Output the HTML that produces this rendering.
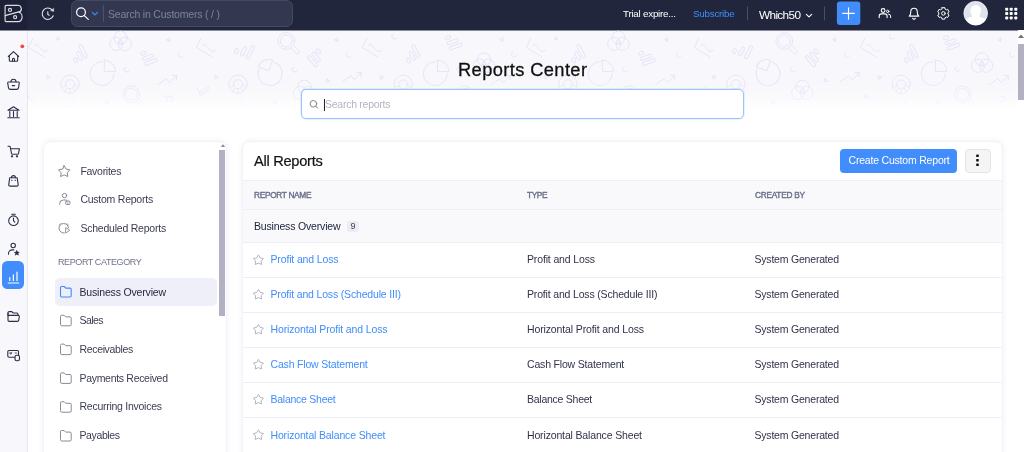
<!DOCTYPE html>
<html lang="en">
<head>
<meta charset="utf-8">
<title>Reports Center</title>
<style>
*{box-sizing:border-box;margin:0;padding:0}
html,body{width:1024px;height:452px;overflow:hidden;background:#fff}
body{font-family:"Liberation Sans",sans-serif;font-size:11px;color:#21263c;position:relative}
#wrap{position:absolute;left:0;top:0;width:1024px;height:452px;overflow:hidden;will-change:transform;opacity:.999}
.abs{position:absolute}
svg{display:block;overflow:visible}
/* top bar */
#top{left:0;top:0;width:1024px;height:30px;background:#21263c;box-shadow:0 1px 0 #8a8c9b}
#logo{left:0;top:0;width:27px;height:30px;background:#1d2137}
#gsearch{left:71px;top:-.5px;width:222px;height:27px;background:#333850;border:1px solid #454a63;border-radius:6.500px}
.t{position:absolute;white-space:nowrap;line-height:1}
/* side */
#side{left:0;top:31px;width:27.5px;height:422px;background:#f7f7fc;border-right:1px solid #e6e6f0}
/* hero */
#hero{left:28px;top:31px;width:990px;height:80px;background:#f8f8fc}
#vsb{left:1018px;top:30px;width:6px;height:422px;background:#fff}
#vsb i{position:absolute;left:0;top:14px;width:6px;height:56px;background:#b3b1c1}
#rsearch{left:301px;top:89px;width:443px;height:30px;background:#fff;border:1px solid #9dc3fa;border-radius:5px;box-shadow:0 0 0 1px rgba(64,141,251,.12)}
/* cards */
.card{background:#fff;border:1px solid #f2f2f9;border-radius:8px;box-shadow:0 0 5px rgba(200,200,235,.3)}
#lcard{left:43px;top:141px;width:184px;height:330px}
#rcard{left:242px;top:141px;width:761px;height:330px;overflow:hidden}
.li{color:#3a3d52;font-size:11px}
.sel{left:55px;top:278px;width:162px;height:28px;background:#efeffa;border-radius:5px}
.th{font-size:8.3px;font-weight:400;color:#6c718b;-webkit-text-stroke:.4px #6c718b}
.row{left:0;width:761px;height:35px;border-top:1px solid #eeeef5}
.lnk{color:#408dfb}
.cell{color:#30334a}
</style>
</head>
<body>
<div id="wrap">
<!-- TOP BAR -->
<div id="top" class="abs"></div>
<div id="logo" class="abs"></div>
<div id="gsearch" class="abs"></div>
<svg class="abs" style="left:0;top:0" width="1024" height="30" viewBox="0 0 1024 30" fill="none" stroke="#fff" stroke-width="1.1" stroke-linecap="round" stroke-linejoin="round">
  <!-- logo -->
  <g stroke="#dcdce4" stroke-width="1.150">
  <path d="M5.100 14.600 V6.300 a1 1 0 0 1 1 -1 H17.600 a3.700 3.700 0 0 1 1.500 7.100 a3.500 4.600 0 0 1 -1.100 9.200 H6.100 a1 1 0 0 1 -1 -1 V15.800"/>
  <path d="M5.100 15.700 L19.600 11.700" stroke-width="1.300"/>
  <circle cx="10" cy="9.900" r="1.550"/>
  <circle cx="15.100" cy="17.200" r="1.550"/>
  </g>
  <!-- history -->
  <g stroke="#e4e4ea"><path d="M51.900 9.700 A5.700 5.700 0 1 0 53.200 15.800"/>
  <path d="M53.700 8.500 V11.500 L50.900 10.700 Z" fill="#e4e4ea" stroke-width=".4"/>
  <path d="M47.800 11.900 v2.600 l1.400 .8"/></g>
  <!-- search -->
  <circle cx="81" cy="12.3" r="4.4" stroke-width="1.2"/>
  <path d="M84.3 15.6 L88.3 19.4" stroke-width="1.2"/>
  <path d="M92.3 12.3 l2.6 2.6 l2.6 -2.6" stroke="#408dfb" stroke-width="1.2"/>
  <path d="M103.5 5.5 V21.5" stroke="#4e536d" stroke-width="1"/>
  <!-- dividers -->
  <path d="M747.5 7 V20" stroke="#4a4f68" stroke-width="1"/>
  <path d="M824.5 7 V20" stroke="#4a4f68" stroke-width="1"/>
  <path d="M806.300 14.300 l2.700 2.600 l2.700 -2.600" stroke-width="1.100"/>
  <!-- plus button -->
  <rect x="836.900" y="1.600" width="23.400" height="23.400" rx="3" fill="#408dfb" stroke="none"/>
  <path d="M848.500 7.700 V19.200 M842.700 13.400 H854.300" stroke-width="1.100"/>
  <!-- users -->
  <circle cx="883.100" cy="10.500" r="1.900"/>
  <path d="M879.200 17.600 v-1.500 a2.200 2.200 0 0 1 2.200 -2.200 h3.500 a2.200 2.200 0 0 1 2.200 2.200 v1.500"/>
  <circle cx="887.700" cy="11.400" r="1.200" stroke-width="1"/>
  <path d="M888.600 14.100 a2 2 0 0 1 2 2 v1.500" stroke-width="1"/>
  <!-- bell -->
  <path d="M909.200 16.100 c1.400 -.9 1.600 -2 1.600 -4.600 a3.200 3.200 0 0 1 6.400 0 c0 2.600 .2 3.700 1.600 4.600 Z"/>
  <path d="M912.700 18.200 a1.400 1.400 0 0 0 2.600 0"/>
  <!-- gear -->
  <path d="M941.97 7.68 L944.83 7.68 L944.93 8.96 L946.48 9.85 L947.64 9.30 L949.07 11.77 L948.01 12.50 L948.01 14.30 L949.07 15.03 L947.64 17.50 L946.48 16.95 L944.93 17.84 L944.83 19.12 L941.97 19.12 L941.87 17.84 L940.32 16.95 L939.16 17.50 L937.73 15.03 L938.79 14.30 L938.79 12.50 L937.73 11.77 L939.16 9.30 L940.32 9.85 L941.87 8.96 Z" stroke-width="1"/>
  <circle cx="943.400" cy="13.400" r="1.800" stroke-width="1"/>
  <!-- avatar -->
  <circle cx="975.700" cy="13.200" r="11.900" fill="#dfe3ed" stroke="#f4f5f9" stroke-width=".6"/>
  <path d="M965.600 19.600 c1.200 -1.600 3.400 -2 5.600 -2.400 c1 -.2 1.200 -.9 .8 -1.700 c-2.600 -4 -1.800 -10.600 3.800 -10.600 s6.400 6.600 3.800 10.600 c-.4 .8 -.2 1.500 .8 1.700 c2.200 .4 4.400 .8 5.600 2.400 a11.900 11.900 0 0 1 -20.400 0 Z" fill="#fff" stroke="none"/>
  <!-- grid -->
  <g fill="#fff" stroke="none">
    <rect x="1005.200" y="7.750" width="3" height="3" rx=".8"/><rect x="1009.700" y="7.750" width="3" height="3" rx=".8"/><rect x="1014.300" y="7.750" width="3" height="3" rx=".8"/>
    <rect x="1005.200" y="12.050" width="3" height="3" rx=".8"/><rect x="1009.700" y="12.050" width="3" height="3" rx=".8"/><rect x="1014.300" y="12.050" width="3" height="3" rx=".8"/>
    <rect x="1005.200" y="16.400" width="3" height="3" rx=".8"/><rect x="1009.700" y="16.400" width="3" height="3" rx=".8"/><rect x="1014.300" y="16.400" width="3" height="3" rx=".8"/>
  </g>
</svg>
<div class="t" style="left:108px;top:8.800px;font-size:10.5px;color:#7e839c;letter-spacing:-0.196px">Search in Customers ( / )</div>
<div class="t" style="left:623px;top:8.500px;font-size:9.8px;color:#fff;letter-spacing:-0.233px">Trial expire...</div>
<div class="t" style="left:693px;top:8.500px;font-size:9.8px;color:#408dfb;letter-spacing:-0.229px">Subscribe</div>
<div class="t" style="left:759px;top:9.600px;font-size:11.8px;color:#fff;letter-spacing:-0.651px">Which50</div>

<!-- SIDE -->
<div id="side" class="abs"></div>
<div class="abs" style="left:2.200px;top:261.300px;width:21.800px;height:27.500px;border-radius:5.500px;background:#408dfb"></div>
<svg class="abs" style="left:0;top:30px" width="28" height="422" viewBox="0 30 28 422" fill="none" stroke="#2a2f45" stroke-width="1.1" stroke-linecap="round" stroke-linejoin="round">
  <circle cx="22.300" cy="46.300" r="1.900" fill="#f0483e" stroke="none"/>
  <!-- home -->
  <path d="M8.300 56.500 L13.500 51.700 L18.700 56.500 M9.300 55.800 V60.300 a1 1 0 0 0 1 1 H16.700 a1 1 0 0 0 1 -1 V55.800"/>
  <path d="M12.500 61 v-1.700 a1 1 0 0 1 2 0 V61"/>
  <!-- basket -->
  <g transform="translate(0 .8)"><path d="M8.500 81.200 H18.500 a.8 .8 0 0 1 .8 1 L18.500 87 a2 2 0 0 1 -2 1.600 H10.500 a2 2 0 0 1 -2 -1.600 L7.700 82.200 a.8 .8 0 0 1 .8 -1 Z"/>
  <path d="M11 81 a2.500 2.500 0 0 1 5 0"/>
  <path d="M12.300 84.800 h2.400"/></g>
  <!-- bank -->
  <path d="M8 110.300 L13.500 106.800 L19 110.300 Z"/>
  <path d="M9.800 111.500 V116.500 M13.500 111.500 V116.500 M17.200 111.500 V116.500 M7.800 117.800 H19.200"/>
  <!-- cart -->
  <path d="M8 146.300 h1.300 a1 1 0 0 1 1 .8 l1.200 6.400 a1 1 0 0 0 1 .8 h5 a1 1 0 0 0 1 -.8 l.9 -4.700 H11"/>
  <circle cx="12" cy="156.300" r=".6"/><circle cx="17" cy="156.300" r=".6"/>
  <!-- bag -->
  <path d="M9.700 177.800 H17.200 l1 7 a1.200 1.200 0 0 1 -1.200 1.300 H9.900 a1.200 1.200 0 0 1 -1.200 -1.300 Z"/>
  <path d="M11.500 177.600 a2 2 0 0 1 4 0"/>
  <path d="M11.500 180.300 h.6 M15 180.300 h.6" stroke-width=".9"/>
  <!-- timer -->
  <circle cx="13.500" cy="220.700" r="4.800"/>
  <path d="M11.700 214.300 h3.600 M13.500 218 v2.700 l1.300 1.500"/>
  <!-- user star -->
  <circle cx="13.200" cy="245.500" r="2.200"/>
  <path d="M8.500 254.300 v-.6 a3.800 3.800 0 0 1 3.800 -3.800 h1.500"/>
  <path d="M16.800 250.500 l.8 1.600 l1.700 .2 l-1.300 1.200 l.4 1.700 l-1.600 -.9 l-1.600 .9 l.4 -1.700 l-1.300 -1.200 l1.700 -.2 Z" fill="#2a2f45" stroke-width=".5"/>
  <!-- chart (active) -->
  <path d="M9.800 277.500 v3 M13.400 274.800 v5.700 M17 272.200 v8.300 M8.300 283 H18.700" stroke="#fff" stroke-width="1.200"/>
  <!-- folder -->
  <path d="M8 313 V320.200 a1.200 1.200 0 0 0 1.200 1.200 H17.500 a1.200 1.200 0 0 0 1.200 -1 l.6 -3.800 a1 1 0 0 0 -1 -1.200 H9 a1 1 0 0 0 -1 1"/>
  <path d="M8 315.500 V312.800 a1.200 1.200 0 0 1 1.200 -1.200 H11.800 l1.400 1.400 H16.800 a1.200 1.200 0 0 1 1.200 1.200 V315.200"/>
  <!-- payments -->
  <path d="M16.200 357.300 H9 a1.200 1.200 0 0 1 -1.200 -1.200 V351.700 a1.200 1.200 0 0 1 1.200 -1.200 H17.300 a1.200 1.200 0 0 1 1.200 1.200 V355"/>
  <rect x="15" y="355.300" width="4.500" height="5.500" rx="1.700" fill="#f7f7fc"/>
  <path d="M10 352.800 h2 l-1 1.200 Z M15 353 h1.500" stroke-width=".8"/>
</svg>

<!-- HERO -->
<div id="hero" class="abs"></div>
<svg class="abs" style="left:28px;top:30px" width="990" height="90" viewBox="0 0 990 90" fill="none" stroke="#e5e5f7" stroke-width="1" stroke-linecap="round" stroke-linejoin="round">
<defs>
  <g id="d-line"><path d="M4.900 8.400 L.4 17.300 L15.900 27"/><path d="M6.600 15 c2.500 -1.200 4 .8 5.600 2.700 c1.800 2.200 2.800 5.200 7.300 2.700"/></g>
  <g id="d-tri"><path d="M0 -1.800 L1.800 1.300 L-1.800 1.300 Z"/></g>
  <g id="d-cres"><path d="M-1.500 -2.200 a2.600 2.600 0 1 0 3.600 3.400"/></g>
  <g id="d-bars"><rect x="-7" y="3.500" width="3.200" height="5" rx="1.600"/><rect x="-1.600" y="-1" width="3.200" height="9.500" rx="1.600"/><rect x="3.800" y="-6" width="3.200" height="14.500" rx="1.600"/></g>
  <g id="d-hbars"><rect x="-6.500" y="-7" width="5.500" height="3.200" rx="1.600"/><rect x="-6.500" y="-1.600" width="11.500" height="3.200" rx="1.600"/><rect x="-6.500" y="3.800" width="13.500" height="3.200" rx="1.600"/></g>
  <g id="d-venn"><circle cx="0" cy="-4" r="6.600"/><circle cx="-4.200" cy="2.200" r="6.600"/><circle cx="4.200" cy="2.200" r="6.600"/><path d="M0 -2 L2 1.500 L-2 1.500 Z"/></g>
  <g id="d-pie"><path d="M0 -12 A12 12 0 1 0 12 0"/><path d="M2.200 -13.500 V-2.200 H13.500 A11.300 11.300 0 0 0 2.200 -13.500 Z"/></g>
  <g id="d-donut"><circle r="9.200"/><circle r="4.500"/><path d="M-4.300 1.400 L-8.700 2.900 M-2.700 3.600 L-5.400 7.400 M0 4.500 V9.200 M2.700 3.600 L5.400 7.400 M4.300 1.400 L8.700 2.900"/></g>
  <g id="d-mag"><circle r="8.400"/><circle r="6"/><path d="M4.800 7 L9.500 12.200 a1.900 1.900 0 0 0 2.900 -2.500 L7.200 4.500"/></g>
  <g id="d-trend"><path d="M0 9.500 L8.900 3.300 L12.200 7.300 L19.300 0"/><path d="M14.800 -.2 L19.300 0 L19 4.300"/></g>
</defs>
<g id="tileA">
  <use href="#d-line"/>
  <use href="#d-tri" x="29.900" y="8.400" transform="rotate(-15 29.900 8.400)"/>
  <use href="#d-bars" transform="translate(49.800 22.500) rotate(-27)"/>
  <use href="#d-venn" x="92.500" y="11.700"/>
  <use href="#d-hbars" transform="translate(120.600 27) rotate(-20)"/>
  <use href="#d-tri" transform="translate(140.700 9.500) rotate(30)"/>
  <use href="#d-cres" x="153.100" y="24.800"/>
  <use href="#d-pie" x="74.100" y="43.600"/>
  <use href="#d-cres" x="99.100" y="39.400"/>
  <use href="#d-trend" x="129.400" y="45.400"/>
  <use href="#d-tri" transform="translate(19.900 46.900) rotate(-30)"/>
  <use href="#d-donut" x="42" y="54.200"/>
  <use href="#d-mag" x="103.300" y="64.200"/>
  <use href="#d-cres" x="3.300" y="67"/>
  <use href="#d-cres" transform="translate(39.500 74) rotate(-100)"/><use href="#d-cres" transform="translate(44.500 74) rotate(-100)"/>
  <use href="#d-tri" x="79" y="71.900"/>
  <use href="#d-cres" transform="translate(137 68.600) rotate(-150)"/><use href="#d-cres" transform="translate(142 68.600) rotate(-150)"/>
</g>
<g id="tileB" transform="translate(168 0)">
  <use href="#d-line"/>
  <path d="M1 57.500 l3.500 8 l10 -6.500 M4 62 c2 -.5 3 -.5 4.500 -2 s2.500 -2.500 4.500 -3"/>
  <use href="#d-tri" transform="translate(19.900 46.900) rotate(-30)"/>
  <g><rect x="-1.600" y="-2.500" width="3.200" height="5" rx="1.600" transform="translate(40.500 21) rotate(27)"/><rect x="-1.600" y="-4.750" width="3.200" height="9.500" rx="1.600" transform="translate(47.500 21.500) rotate(27)"/><rect x="-1.600" y="-7" width="3.200" height="14" rx="1.600" transform="translate(54.500 22.200) rotate(27)"/></g>
  <use href="#d-mag" x="90.300" y="11"/>
  <use href="#d-hbars" transform="translate(120.600 27.600) rotate(50)"/>
  <use href="#d-tri" transform="translate(140.700 9.500) rotate(30)"/>
  <use href="#d-cres" x="153.100" y="24.800"/>
  <use href="#d-pie" transform="translate(74.100 43.600) rotate(-70)"/>
  <use href="#d-cres" x="99.100" y="39.400"/>
  <use href="#d-donut" x="42" y="54.200"/>
  <use href="#d-trend" x="146" y="42.500"/>
  <use href="#d-tri" transform="translate(131.400 50.400) rotate(-10)"/>
  <use href="#d-venn" x="108.400" y="60.700"/>
  <use href="#d-cres" transform="translate(45 74) rotate(-130)"/>
  <use href="#d-tri" x="79" y="71.900"/>
</g>
<g id="tileC" transform="translate(334 0)">
  <use href="#d-line"/>
  <use href="#d-cres" x="32.500" y="6.400"/>
  <use href="#d-bars" transform="translate(48.500 22.500) rotate(-27)"/>
  <use href="#d-hbars" transform="translate(91.500 11.500) rotate(-20)"/>
  <use href="#d-tri" transform="translate(139.900 9.400) rotate(30)"/>
  <use href="#d-venn" x="122" y="33.500"/>
  <use href="#d-cres" x="152.300" y="24.500"/>
  <use href="#d-pie" x="73.300" y="43.600"/>
  <use href="#d-cres" x="97.800" y="38.700"/>
  <use href="#d-trend" x="129" y="45.400"/>
  <use href="#d-tri" transform="translate(19.400 47.200) rotate(-30)"/>
  <use href="#d-donut" x="41.200" y="54.400"/>
  <use href="#d-mag" x="102.700" y="64.400"/>
  <use href="#d-tri" x="6.700" y="66.200"/>
  <use href="#d-cres" transform="translate(44.300 74) rotate(-130)"/>
  <use href="#d-tri" x="78.400" y="72.200"/>
  <use href="#d-cres" transform="translate(141.700 69) rotate(-130)"/>
</g>
<use href="#tileA" x="498"/>
<use href="#tileB" x="498"/>
<use href="#tileC" x="498"/>
</svg>
<div class="abs" style="left:28px;top:31px;width:990px;height:80px;background:linear-gradient(rgba(255,255,255,0) 0,rgba(255,255,255,0) 62%,rgba(255,255,255,.4) 84%,rgba(255,255,255,1) 100%)"></div>
<div id="vsb" class="abs"><i></i></div>
<svg class="abs" style="left:1018px;top:33px" width="6" height="6" viewBox="0 0 6 6"><path d="M0 5 L3 1.500 L6 5 Z" fill="#6f6f7c"/></svg>
<div class="t" style="left:458px;top:61px;font-size:18.3px;color:#111;-webkit-text-stroke:.3px #111;letter-spacing:0.387px">Reports Center</div>
<div id="rsearch" class="abs"></div>
<svg class="abs" style="left:308px;top:98px" width="12" height="12" viewBox="0 0 12 12" fill="none" stroke="#858590" stroke-width="1" stroke-linecap="round"><circle cx="5.400" cy="5.800" r="3.300"/><path d="M7.900 8.300 L9.700 10.100"/></svg>
<div class="abs" style="left:323.500px;top:98.500px;width:1px;height:12px;background:#222"></div>
<div class="t" style="left:325px;top:99px;font-size:10.5px;color:#b4b5c4;letter-spacing:-0.260px">Search reports</div>

<!-- LEFT CARD -->
<div id="lcard" class="abs card"></div>
<div class="abs" style="left:219.400px;top:150px;width:5.800px;height:166px;background:#b3b1c1"></div>
<svg class="abs" style="left:219.500px;top:143.300px" width="6" height="5" viewBox="0 0 6 5"><path d="M.8 4 L3 1.300 L5.200 4 Z" fill="#8a8a96"/></svg>
<div class="abs sel"></div>
<svg class="abs" style="left:43px;top:142px" width="184" height="310" viewBox="43 142 184 310" fill="none" stroke="#888a97" stroke-width="1" stroke-linecap="round" stroke-linejoin="round">
  <!-- star -->
  <path transform="translate(64.200 171.700)" d="M0.00 -6.00 L1.88 -2.59 L5.71 -1.85 L3.04 0.99 L3.53 4.85 L0.00 3.20 L-3.53 4.85 L-3.04 0.99 L-5.71 -1.85 L-1.88 -2.59 Z"/>
  <!-- custom -->
  <circle cx="64.500" cy="195.600" r="2.200"/>
  <path d="M59.600 204.300 v-.5 a3.800 3.800 0 0 1 3.800 -3.800 h2.600"/>
  <rect x="65.700" y="201" width="4.200" height="3.500" rx=".8"/>
  <path d="M67.800 202.100 v1.300" stroke-width=".8"/>
  <!-- scheduled -->
  <path d="M64.300 233 a4.750 4.750 0 1 1 4.200 -5.300"/>
  <path d="M59.300 225 l1.500 -1.500 M68.400 225 l-1.500 -1.500"/>
  <path d="M65.700 228 v5 l3.800 -2.500 Z" stroke-width=".9"/>
  <!-- folders -->
  <g id="fold"><path d="M60.500 287.500 a1 1 0 0 1 1 -1 h2.700 l1.500 1.600 h4.300 a1.200 1.200 0 0 1 1.200 1.200 v6.500 a1.200 1.200 0 0 1 -1.200 1.200 h-8.300 a1.200 1.200 0 0 1 -1.200 -1.200 Z" stroke="#408dfb" stroke-width="1.100"/></g>
  <path d="M60.500 316.300 a1 1 0 0 1 1 -1 h2.700 l1.500 1.600 h4.300 a1.200 1.200 0 0 1 1.200 1.200 v6.500 a1.200 1.200 0 0 1 -1.200 1.200 h-8.300 a1.200 1.200 0 0 1 -1.200 -1.200 Z"/>
  <path d="M60.500 345.100 a1 1 0 0 1 1 -1 h2.700 l1.500 1.600 h4.300 a1.200 1.200 0 0 1 1.200 1.200 v6.500 a1.200 1.200 0 0 1 -1.200 1.200 h-8.300 a1.200 1.200 0 0 1 -1.200 -1.200 Z"/>
  <path d="M60.500 373.900 a1 1 0 0 1 1 -1 h2.700 l1.500 1.600 h4.300 a1.200 1.200 0 0 1 1.200 1.200 v6.500 a1.200 1.200 0 0 1 -1.200 1.200 h-8.300 a1.200 1.200 0 0 1 -1.200 -1.200 Z"/>
  <path d="M60.500 402.700 a1 1 0 0 1 1 -1 h2.700 l1.500 1.600 h4.300 a1.200 1.200 0 0 1 1.200 1.200 v6.500 a1.200 1.200 0 0 1 -1.200 1.200 h-8.300 a1.200 1.200 0 0 1 -1.200 -1.200 Z"/>
  <path d="M60.500 431.500 a1 1 0 0 1 1 -1 h2.700 l1.500 1.600 h4.300 a1.200 1.200 0 0 1 1.200 1.200 v6.500 a1.200 1.200 0 0 1 -1.200 1.200 h-8.300 a1.200 1.200 0 0 1 -1.200 -1.200 Z"/>
</svg>
<div class="t li" style="left:80.400px;top:165.500px;font-size:10.5px;letter-spacing:-0.273px">Favorites</div>
<div class="t li" style="left:80.400px;top:194px;font-size:10.5px;letter-spacing:-0.239px">Custom Reports</div>
<div class="t li" style="left:80.400px;top:222.500px;font-size:10.5px;letter-spacing:-0.223px">Scheduled Reports</div>
<div class="t" style="left:58px;top:258px;font-size:9px;color:#6f7388;letter-spacing:-0.401px">REPORT CATEGORY</div>
<div class="t li" style="left:79.500px;top:286.500px;color:#262a40;font-size:10.5px;letter-spacing:-0.168px">Business Overview</div>
<div class="t li" style="left:79.500px;top:315px;font-size:10.5px;letter-spacing:-0.566px">Sales</div>
<div class="t li" style="left:79.500px;top:344px;font-size:10.5px;letter-spacing:-0.345px">Receivables</div>
<div class="t li" style="left:79.500px;top:373px;font-size:10.5px;letter-spacing:-0.306px">Payments Received</div>
<div class="t li" style="left:79.500px;top:401px;font-size:10.5px;letter-spacing:-0.262px">Recurring Invoices</div>
<div class="t li" style="left:79.500px;top:430px;font-size:10.5px;letter-spacing:-0.386px">Payables</div>

<!-- RIGHT CARD -->
<div id="rcard" class="abs card">
  <div class="abs" style="left:0;top:38px;width:761px;height:62px;background:#f9f9fc;border-top:1px solid #eeeef5"></div>
  <div class="abs" style="left:0;top:67px;width:761px;height:1px;background:#eeeef5"></div>
  <div class="abs row" style="top:100px"></div>
  <div class="abs row" style="top:135px"></div>
  <div class="abs row" style="top:170px"></div>
  <div class="abs row" style="top:205px"></div>
  <div class="abs row" style="top:240px"></div>
  <div class="abs row" style="top:275px"></div>
</div>
<div class="t" style="left:254px;top:154px;font-size:14.6px;color:#111;-webkit-text-stroke:.2px #111;letter-spacing:-0.263px">All Reports</div>
<div class="abs" style="left:840.300px;top:149px;width:117px;height:23.500px;background:#408dfb;border-radius:4px"></div>
<div class="t" style="left:848.500px;top:154.700px;font-size:10.5px;color:#fff;letter-spacing:-0.200px">Create Custom Report</div>
<div class="abs" style="left:965px;top:149px;width:25.500px;height:23.500px;background:#f5f5f5;border:1px solid #e3e3e3;border-radius:4px"></div>
<svg class="abs" style="left:975px;top:154px" width="6" height="14" viewBox="0 0 6 14"><g fill="#111"><rect x="1.200" y=".450" width="2.600" height="2.600" rx=".6"/><rect x="1.200" y="4.950" width="2.600" height="2.600" rx=".6"/><rect x="1.200" y="9.450" width="2.600" height="2.600" rx=".6"/></g></svg>
<div class="t th" style="left:254px;top:190.500px;font-size:8.3px;letter-spacing:-0.306px">REPORT NAME</div>
<div class="t th" style="left:527px;top:190.500px;font-size:8.3px;letter-spacing:-0.391px">TYPE</div>
<div class="t th" style="left:755px;top:190.500px;font-size:8.3px;letter-spacing:-0.267px">CREATED BY</div>
<div class="t" style="left:254px;top:220.500px;font-size:10.5px;color:#21263c;letter-spacing:-0.168px">Business Overview</div>
<div class="abs" style="left:347px;top:220.500px;width:12.300px;height:11.500px;background:#ececf7;border-radius:3px"></div>
<div class="t" style="left:350.500px;top:222px;font-size:9px;color:#444">9</div>
<svg class="abs" style="left:242px;top:242px" width="40" height="210" viewBox="242 242 40 210" fill="none" stroke="#b4b5c0" stroke-width="1" stroke-linejoin="round">
  <path transform="translate(258.400 260.2)" d="M0.00 -5.30 L1.70 -2.35 L5.04 -1.64 L2.76 0.90 L3.12 4.29 L0.00 2.90 L-3.12 4.29 L-2.76 0.90 L-5.04 -1.64 L-1.70 -2.35 Z"/>
  <path transform="translate(258.400 294.7)" d="M0.00 -5.30 L1.70 -2.35 L5.04 -1.64 L2.76 0.90 L3.12 4.29 L0.00 2.90 L-3.12 4.29 L-2.76 0.90 L-5.04 -1.64 L-1.70 -2.35 Z"/>
  <path transform="translate(258.400 329.7)" d="M0.00 -5.30 L1.70 -2.35 L5.04 -1.64 L2.76 0.90 L3.12 4.29 L0.00 2.90 L-3.12 4.29 L-2.76 0.90 L-5.04 -1.64 L-1.70 -2.35 Z"/>
  <path transform="translate(258.400 364.7)" d="M0.00 -5.30 L1.70 -2.35 L5.04 -1.64 L2.76 0.90 L3.12 4.29 L0.00 2.90 L-3.12 4.29 L-2.76 0.90 L-5.04 -1.64 L-1.70 -2.35 Z"/>
  <path transform="translate(258.400 399.7)" d="M0.00 -5.30 L1.70 -2.35 L5.04 -1.64 L2.76 0.90 L3.12 4.29 L0.00 2.90 L-3.12 4.29 L-2.76 0.90 L-5.04 -1.64 L-1.70 -2.35 Z"/>
  <path transform="translate(258.400 435.2)" d="M0.00 -5.30 L1.70 -2.35 L5.04 -1.64 L2.76 0.90 L3.12 4.29 L0.00 2.90 L-3.12 4.29 L-2.76 0.90 L-5.04 -1.64 L-1.70 -2.35 Z"/>
</svg>
<div class="t lnk" style="left:270.500px;top:254px;font-size:10.5px;letter-spacing:-0.146px">Profit and Loss</div>
<div class="t cell" style="left:527px;top:254px;font-size:10.5px;letter-spacing:-0.146px">Profit and Loss</div>
<div class="t cell" style="left:754.500px;top:254px;font-size:10.5px;letter-spacing:-0.203px">System Generated</div>
<div class="t lnk" style="left:270.500px;top:289.0px;font-size:10.5px;letter-spacing:-0.169px">Profit and Loss (Schedule III)</div>
<div class="t cell" style="left:527px;top:289.0px;font-size:10.5px;letter-spacing:-0.169px">Profit and Loss (Schedule III)</div>
<div class="t cell" style="left:754.500px;top:289.0px;font-size:10.5px;letter-spacing:-0.203px">System Generated</div>
<div class="t lnk" style="left:270.500px;top:324.0px;font-size:10.5px;letter-spacing:-0.129px">Horizontal Profit and Loss</div>
<div class="t cell" style="left:527px;top:324.0px;font-size:10.5px;letter-spacing:-0.129px">Horizontal Profit and Loss</div>
<div class="t cell" style="left:754.500px;top:324.0px;font-size:10.5px;letter-spacing:-0.203px">System Generated</div>
<div class="t lnk" style="left:270.500px;top:359.0px;font-size:10.5px;letter-spacing:-0.174px">Cash Flow Statement</div>
<div class="t cell" style="left:527px;top:359.0px;font-size:10.5px;letter-spacing:-0.174px">Cash Flow Statement</div>
<div class="t cell" style="left:754.500px;top:359.0px;font-size:10.5px;letter-spacing:-0.203px">System Generated</div>
<div class="t lnk" style="left:270.500px;top:394.0px;font-size:10.5px;letter-spacing:-0.255px">Balance Sheet</div>
<div class="t cell" style="left:527px;top:394.0px;font-size:10.5px;letter-spacing:-0.255px">Balance Sheet</div>
<div class="t cell" style="left:754.500px;top:394.0px;font-size:10.5px;letter-spacing:-0.203px">System Generated</div>
<div class="t lnk" style="left:270.500px;top:429.5px;font-size:10.5px;letter-spacing:-0.152px">Horizontal Balance Sheet</div>
<div class="t cell" style="left:527px;top:429.5px;font-size:10.5px;letter-spacing:-0.152px">Horizontal Balance Sheet</div>
<div class="t cell" style="left:754.500px;top:429.5px;font-size:10.5px;letter-spacing:-0.203px">System Generated</div>
</div>
</body>
</html>
